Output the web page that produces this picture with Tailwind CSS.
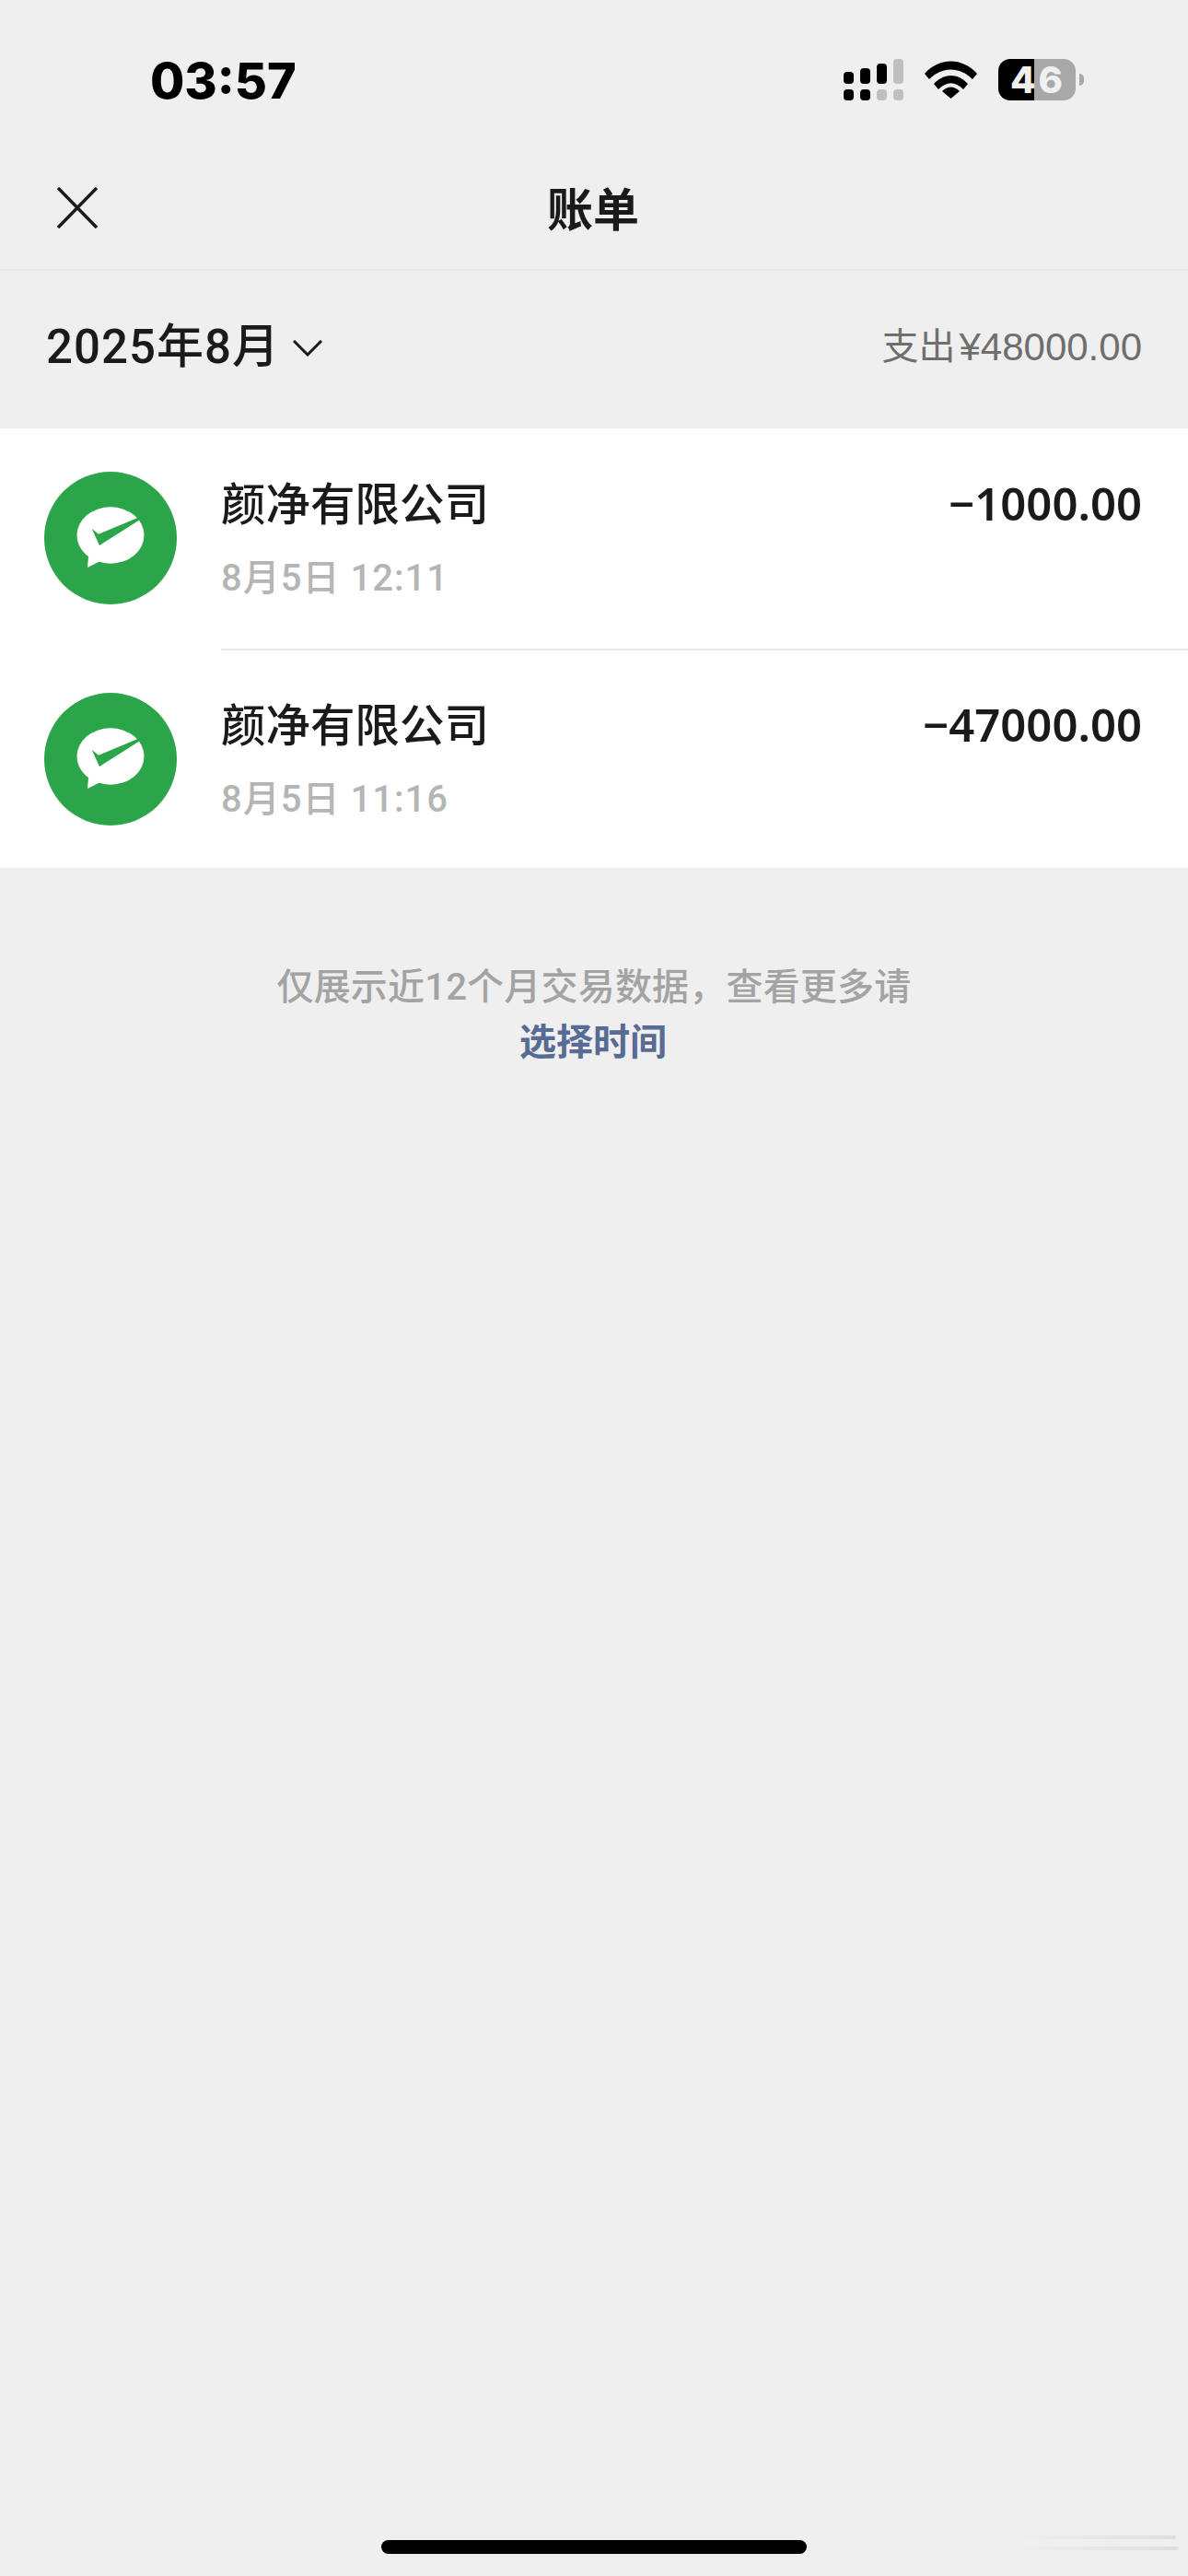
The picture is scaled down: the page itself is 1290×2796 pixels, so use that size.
<!DOCTYPE html>
<html lang="zh">

<head>
    <meta charset="UTF-8">
    <meta name="viewport" content="width=device-width, initial-scale=1.0">
    <title>账单</title>
    <script src="https://cdn.jsdelivr.net/npm/@tailwindcss/browser@4"></script>
</head>

<body class="bg-[#efefef] font-['Roboto','Noto_Sans_CJK_SC',sans-serif]">
    <div class="relative flex flex-col w-[1290px] h-[2796px] overflow-hidden">

        <!-- status bar -->
        <div class="flex justify-between items-start h-[174px] pt-[64px] pl-[163px] pr-[113px]">
            <span class="font-['Inter',sans-serif] text-[54px] leading-[48px] font-extrabold text-black">03:57</span>
            <div class="flex items-start">
                <svg class="w-[65px] h-[45px]" viewBox="0 0 65 45">
                    <rect x="0" y="14" width="11" height="13" rx="4" fill="#000" />
                    <rect x="18" y="10" width="11" height="17" rx="4" fill="#000" />
                    <rect x="36" y="5" width="11" height="22" rx="4" fill="#000" />
                    <rect x="54" y="0" width="11" height="27" rx="4" fill="#bfbfbf" />
                    <rect x="0" y="33" width="11" height="12" rx="4" fill="#000" />
                    <rect x="18" y="33" width="11" height="12" rx="4" fill="#000" />
                    <rect x="36" y="33" width="11" height="12" rx="4" fill="#bfbfbf" />
                    <rect x="54" y="33" width="11" height="12" rx="4" fill="#bfbfbf" />
                </svg>
                <svg class="w-[57px] h-[41px] mt-[2px] ml-[23px]" viewBox="0 0 57 41">
                    <path d="M0 14 C16 -4 41 -4 57 14 L52 20 C38 6 19 6 5 20 Z" fill="#000" />
                    <path d="M10 25 C21 13 36 13 47 25 L42 31 C33 22 24 22 15 31 Z" fill="#000" />
                    <path d="M19 33 C25 27 32 27 38 33 L28.500 41 Z" fill="#000" />
                </svg>
                <div class="relative flex w-[84px] h-[45px] ml-[23px]">
                    <div class="w-[39px] h-full rounded-l-[13px] bg-black"></div>
                    <div class="flex-1 h-full rounded-r-[13px] bg-[#a8a8a8]"></div>
                    <span class="absolute left-[13px] top-0 font-['Inter',sans-serif] text-[40px] leading-[45px] font-extrabold text-[#f0f0f0] tracking-[3px]">46</span>
                </div>
                <div class="w-[5px] h-[13px] mt-[16px] ml-[4px] rounded-r-full bg-[#a8a8a8]"></div>
            </div>
        </div>

        <!-- title bar -->
        <div class="relative flex justify-center items-center h-[120px] border-b-2 border-[#e8e8e8]">
            <svg class="absolute left-[62px] top-[29px] w-[44px] h-[45px]" viewBox="0 0 44 45" fill="none" stroke="#1a1a1a" stroke-width="3.500">
                <path d="M1 1 L43 44 M43 1 L1 44" />
            </svg>
            <h1 class="text-[50px] leading-[56px] font-semibold text-[#1a1a1a] mb-[8px] mr-[2px]">账单</h1>
        </div>

        <!-- month summary -->
        <div class="flex justify-between items-center h-[171px] pl-[50px] pr-[50px] pb-[6px]">
            <div class="flex items-center">
                <span class="text-[51px] leading-[60px] font-medium text-[#1a1a1a] tracking-[1px]">2025年8月</span>
                <svg class="w-[32px] h-[18px] ml-[14px] mt-[2px]" viewBox="0 0 32 18" fill="none" stroke="#1a1a1a" stroke-width="3">
                    <path d="M1 1 L16 16 L31 1" />
                </svg>
            </div>
            <div class="flex text-[40px] leading-[50px] text-[#6f6f6f]">
                <span>支出</span>
                <span class="ml-[4px] font-['Liberation_Sans',sans-serif] text-[42px]">¥48000.00</span>
            </div>
        </div>

        <!-- bill list -->
        <div class="flex flex-col bg-white h-[477px]">
            <div class="flex h-[240px] pl-[48px]">
                <svg class="w-[144px] h-[144px] mt-[47px] shrink-0" viewBox="0 0 144 144">
                    <circle cx="72" cy="72" r="72" fill="#2ca44a" />
                    <ellipse cx="72" cy="69" rx="36.500" ry="30.700" fill="#fff" />
                    <path d="M47 104 L48 92 L61 97 Z" fill="#fff" />
                    <path d="M51.700 61.700 L59 67.700 L104 49 L104 52 L60 80 Z" fill="#2ca44a" />
                </svg>
                <div class="flex flex-1 justify-between h-[241px] ml-[48px] pr-[50px] border-b-2 border-[#e8e8e8]">
                    <div class="flex flex-col pt-[56px]">
                        <span class="text-[48.500px] leading-[56px] font-medium text-[#1a1a1a]">颜净有限公司</span>
                        <span class="mt-[27px] text-[40px] leading-[48px] font-medium text-[#b5b5b5] tracking-[1px]">8月5日 12:11</span>
                    </div>
                    <span class="pt-[53px] font-['Noto_Sans',sans-serif] text-[49px] leading-[56px] font-semibold text-[#1a1a1a]">−1000.00</span>
                </div>
            </div>
            <div class="flex h-[237px] pl-[48px]">
                <svg class="w-[144px] h-[144px] mt-[47px] shrink-0" viewBox="0 0 144 144">
                    <circle cx="72" cy="72" r="72" fill="#2ca44a" />
                    <ellipse cx="72" cy="69" rx="36.500" ry="30.700" fill="#fff" />
                    <path d="M47 104 L48 92 L61 97 Z" fill="#fff" />
                    <path d="M51.700 61.700 L59 67.700 L104 49 L104 52 L60 80 Z" fill="#2ca44a" />
                </svg>
                <div class="flex flex-1 justify-between ml-[48px] pr-[50px]">
                    <div class="flex flex-col pt-[56px]">
                        <span class="text-[48.500px] leading-[56px] font-medium text-[#1a1a1a]">颜净有限公司</span>
                        <span class="mt-[27px] text-[40px] leading-[48px] font-medium text-[#b5b5b5] tracking-[1px]">8月5日 11:16</span>
                    </div>
                    <span class="pt-[53px] font-['Noto_Sans',sans-serif] text-[49px] leading-[56px] font-semibold text-[#1a1a1a]">−47000.00</span>
                </div>
            </div>
        </div>

        <!-- footer note -->
        <div class="flex flex-col items-center pt-[100px]">
            <p class="text-[40px] leading-[60px] font-medium text-[#a3a3a3] tracking-[0.200px]">仅展示近12个月交易数据，查看更多请</p>
            <a class="text-[40px] leading-[60px] font-semibold text-[#576b95] mr-[2px]">选择时间</a>
        </div>

        <!-- home indicator -->
        <div class="absolute left-[414px] top-[2757px] w-[462px] h-[15px] rounded-full bg-black"></div>

        <!-- faint watermark lines, bottom right -->
        <div class="absolute left-[1100px] top-[2752px] w-[177px] h-[4px] rounded-full bg-linear-to-r from-transparent to-[#dedede]"></div>
        <div class="absolute left-[1100px] top-[2764px] w-[180px] h-[4px] rounded-full bg-linear-to-r from-transparent to-[#dedede]"></div>
    </div>
</body>

</html>
